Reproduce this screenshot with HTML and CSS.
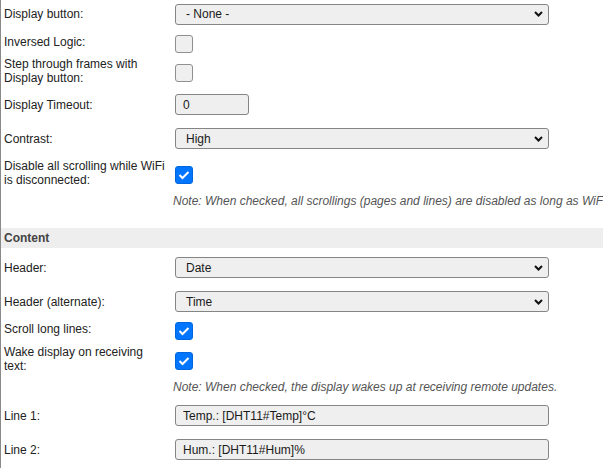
FILE: index.html
```html
<!DOCTYPE html>
<html lang="en">

<head>
  <meta charset="UTF-8">
  <meta name="viewport" content="width=device-width, initial-scale=1.0">
  <title>Display settings</title>
  <link rel="stylesheet" href="styles.css">
</head>

<body>
  <div class="page">
    <div class="row h28">
      <div class="label">Display button:</div>
      <div class="select"><span>- None -</span>
        <svg class="chev" width="9" height="6" viewBox="0 0 9 6"><path d="M1 1l3.5 3.5L8 1" fill="none" stroke="#111" stroke-width="2"/></svg>
      </div>
    </div>
    <div class="row h28">
      <div class="label">Inversed Logic:</div>
      <div class="cb"></div>
    </div>
    <div class="row h30">
      <div class="label">Step through frames with Display button:</div>
      <div class="cb"></div>
    </div>
    <div class="row h37">
      <div class="label">Display Timeout:</div>
      <input class="field short" type="text" value="0">
    </div>
    <div class="row h31">
      <div class="label">Contrast:</div>
      <div class="select"><span>High</span>
        <svg class="chev" width="9" height="6" viewBox="0 0 9 6"><path d="M1 1l3.5 3.5L8 1" fill="none" stroke="#111" stroke-width="2"/></svg>
      </div>
    </div>
    <div class="row h38">
      <div class="label">Disable all scrolling while WiFi is disconnected:</div>
      <div class="cb on">
        <svg width="12" height="10" viewBox="0 0 12 10"><path d="M1.5 5l3 3L10.5 2" fill="none" stroke="#fff" stroke-width="2"/></svg>
      </div>
    </div>
    <div class="note first">Note: When checked, all scrollings (pages and lines) are disabled as long as WiFi is disconnected.</div>

    <div class="section">Content</div>

    <div class="row h39">
      <div class="label">Header:</div>
      <div class="select"><span>Date</span>
        <svg class="chev" width="9" height="6" viewBox="0 0 9 6"><path d="M1 1l3.5 3.5L8 1" fill="none" stroke="#111" stroke-width="2"/></svg>
      </div>
    </div>
    <div class="row h29">
      <div class="label">Header (alternate):</div>
      <div class="select"><span>Time</span>
        <svg class="chev" width="9" height="6" viewBox="0 0 9 6"><path d="M1 1l3.5 3.5L8 1" fill="none" stroke="#111" stroke-width="2"/></svg>
      </div>
    </div>
    <div class="row h26">
      <div class="label">Scroll long lines:</div>
      <div class="cb on">
        <svg width="12" height="10" viewBox="0 0 12 10"><path d="M1.5 5l3 3L10.5 2" fill="none" stroke="#fff" stroke-width="2"/></svg>
      </div>
    </div>
    <div class="row h34">
      <div class="label">Wake display on receiving text:</div>
      <div class="cb on">
        <svg width="12" height="10" viewBox="0 0 12 10"><path d="M1.5 5l3 3L10.5 2" fill="none" stroke="#fff" stroke-width="2"/></svg>
      </div>
    </div>
    <div class="note second">Note: When checked, the display wakes up at receiving remote updates.</div>

    <div class="row h43">
      <div class="label">Line 1:</div>
      <input class="field" type="text" value="Temp.: [DHT11#Temp]°C">
    </div>
    <div class="row h25">
      <div class="label">Line 2:</div>
      <input class="field" type="text" value="Hum.: [DHT11#Hum]%">
    </div>
  </div>
</body>

</html>
```

FILE: styles.css
```css
html, body {
  margin: 0;
  padding: 0;
  background: #fff;
  overflow: hidden;
}

body {
  font-family: "Liberation Sans", Arial, sans-serif;
  font-size: 12px;
  color: #222;
}

.page {
  border-left: 1px solid #8a8a8a;
  min-height: 468px;
  white-space: nowrap;
}

.row {
  display: flex;
  align-items: center;
  padding-left: 3px;
}

.h25 { height: 25px; }
.h26 { height: 26px; }
.h28 { height: 28px; }
.h29 { height: 29px; }
.h30 { height: 30px; }
.h31 { height: 31px; }
.h34 { height: 34px; }
.h37 { height: 37px; }
.h38 { height: 38px; }
.h39 { height: 39px; }
.h43 { height: 43px; }

.label {
  width: 162px;
  margin-right: 9px;
  white-space: normal;
  line-height: 14px;
}

.select {
  box-sizing: border-box;
  width: 374px;
  height: 21px;
  display: flex;
  align-items: center;
  justify-content: space-between;
  padding: 0 5px 0 10px;
  background: #efefef;
  border: 1px solid #858585;
  border-radius: 3px;
  color: #1a1a1a;
}

.chev {
  display: block;
}

.field {
  box-sizing: border-box;
  width: 374px;
  height: 21px;
  margin: 0;
  padding: 0 7px;
  background: #efefef;
  border: 1px solid #858585;
  border-radius: 3px;
  font-family: "Liberation Sans", Arial, sans-serif;
  font-size: 12px;
  color: #1a1a1a;
  outline: none;
}

.field.short {
  width: 74px;
}

.cb {
  box-sizing: border-box;
  width: 18px;
  height: 18px;
  margin-top: 4px;
  background: #efefef;
  border: 1px solid #8f8f8f;
  border-radius: 3px;
  display: flex;
  align-items: center;
  justify-content: center;
}

.cb.on {
  background: #0075ff;
  border-color: #0066dd;
}

.cb svg {
  display: block;
}

.note {
  margin-left: 172px;
  height: 14px;
  line-height: 14px;
  font-style: italic;
  color: #555;
  overflow: hidden;
}

.note.first {
  margin-top: 2px;
}

.note.second {
  margin-top: 4px;
}

.section {
  margin-top: 20px;
  height: 20px;
  line-height: 20px;
  padding-left: 3px;
  background: #eee;
  font-weight: bold;
  color: #444;
}
```
